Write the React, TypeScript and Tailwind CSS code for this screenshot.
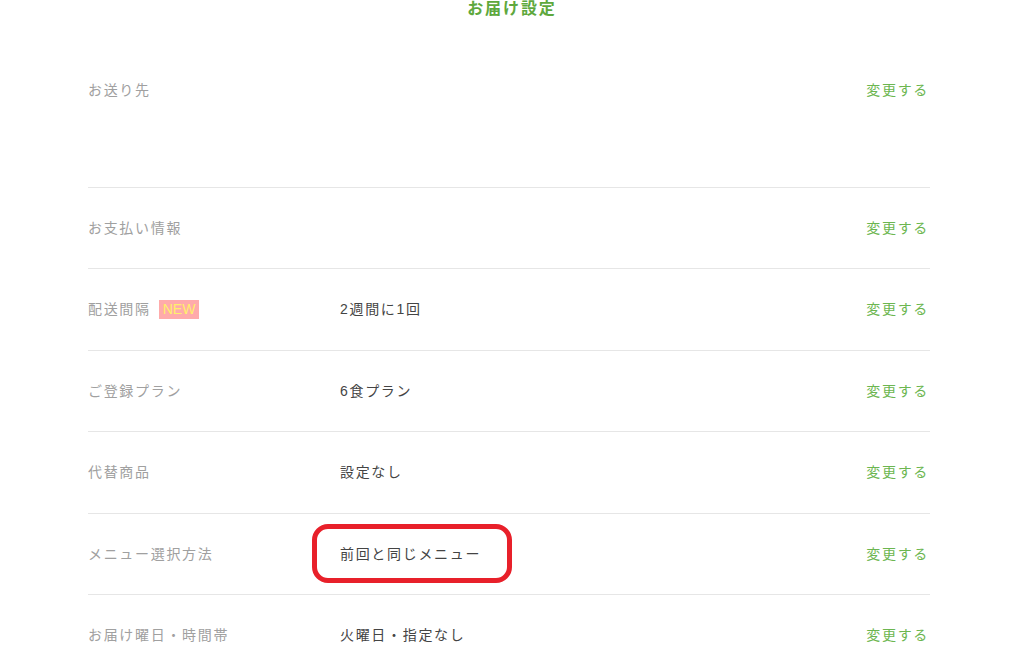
import React from 'react';

type Row = {
    label: string;
    value?: string;
    isNew?: boolean;
    marked?: boolean;
    tall?: boolean;
};

const rows: Row[] = [
    { label: 'お送り先', tall: true },
    { label: 'お支払い情報' },
    { label: '配送間隔', value: '2週間に1回', isNew: true },
    { label: 'ご登録プラン', value: '6食プラン' },
    { label: '代替商品', value: '設定なし' },
    { label: 'メニュー選択方法', value: '前回と同じメニュー', marked: true },
    { label: 'お届け曜日・時間帯', value: '火曜日・指定なし' },
];

const App = () => {
    return (
        <div
            className="w-[1024px] h-[660px] overflow-hidden bg-white"
            style={{ fontFamily: '"Liberation Sans", "Noto Sans CJK JP", sans-serif' }}
        >
            <h1 className="h-4 text-center text-[16px] leading-4 font-bold tracking-[0.12em] text-[#5ea83d] mt-[1px]">
                お届け設定
            </h1>
            <ul className="mt-[33px] ml-[88px] w-[842px]">
                {rows.map((row) => (
                    <li
                        key={row.label}
                        className="flex items-start border-b border-[#e6e6e6] pt-[30px] pb-[30px] text-[14px] leading-[20.4px] tracking-[0.12em]"
                    >
                        <div className={`flex w-[252px] items-center ${row.tall ? 'min-h-[77px] items-start' : ''}`}>
                            <span className="text-[#a0a0a0]">{row.label}</span>
                            {row.isNew && (
                                <span className="ml-[8px] bg-[#ffabab] px-[4px] text-[14px] leading-[19px] tracking-normal text-[#fff06a]">
                                    NEW
                                </span>
                            )}
                        </div>
                        <div className="flex-1 text-[#444444]">
                            {row.value && (
                                <span className="relative">
                                    {row.value}
                                    {row.marked && (
                                        <span className="absolute -left-[28px] -top-[22px] w-[200px] h-[59px] rounded-[16px] border-[5px] border-[#e8202a]" />
                                    )}
                                </span>
                            )}
                        </div>
                        <a className="pr-[1px] text-[#6cb650]">変更する</a>
                    </li>
                ))}
            </ul>
        </div>
    );
};

export default App;
